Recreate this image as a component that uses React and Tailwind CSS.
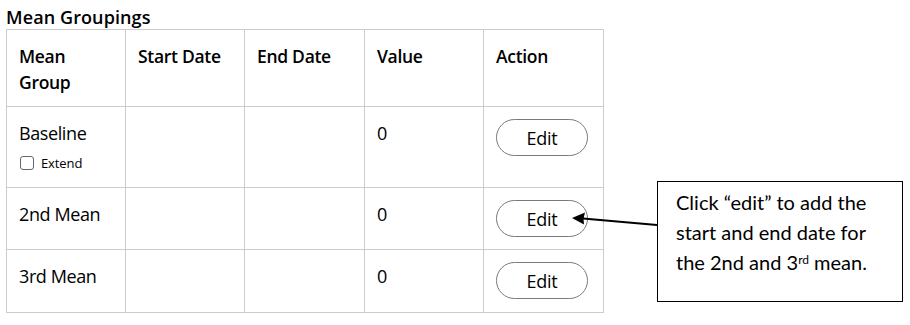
import React from "react";

const rows = [
  { name: "Baseline", extend: true, h: "h-[81px]" },
  { name: "2nd Mean", extend: false, h: "h-[62px]" },
  { name: "3rd Mean", extend: false, h: "h-[63px]" },
];

export default function App() {
  return (
    <div className="relative w-[910px] h-[325px] bg-white flex text-black" style={{ fontFamily: '"Open Sans", "Noto Sans", sans-serif' }}>
      <div className="pl-[6px] pt-[6px] flex flex-col">
        <div className="text-[18px] leading-[23px] font-semibold tracking-[0.1px]">Mean Groupings</div>
        <table className="table-fixed border-collapse w-[598px]">
          <colgroup>
            <col className="w-[119px]" />
            <col className="w-[119px]" />
            <col className="w-[120px]" />
            <col className="w-[119px]" />
            <col className="w-[120px]" />
          </colgroup>
          <thead>
            <tr className="h-[77px]">
              {["Mean Group", "Start Date", "End Date", "Value", "Action"].map((t) => (
                <th key={t} className="border border-[#cccccc] align-top text-left font-semibold text-[17.5px] leading-[26px] pl-[12px] pr-[12px] pt-[13px] tracking-[-0.3px]">
                  {t}
                </th>
              ))}
            </tr>
          </thead>
          <tbody>
            {rows.map((r) => (
              <tr key={r.name} className={r.h}>
                <td className="border border-[#cccccc] align-top pl-[12px] pt-[14px] text-[18px] leading-[24px] tracking-[-0.4px]">
                  <div>{r.name}</div>
                  {r.extend && (
                    <div className="flex items-center gap-[7px] mt-[10px] pl-[1px]">
                      <span className="w-[14px] h-[14px] border border-[#666] rounded-[3px] bg-white" />
                      <span className="text-[13px] leading-[16px] tracking-[-0.1px]">Extend</span>
                    </div>
                  )}
                </td>
                <td className="border border-[#cccccc]" />
                <td className="border border-[#cccccc]" />
                <td className="border border-[#cccccc] align-top pl-[12px] pt-[14px] text-[18px] leading-[24px]">0</td>
                <td className="border border-[#cccccc] align-top pl-[12px] pt-[12px]">
                  <button className="w-[92px] h-[37px] rounded-full border border-[#7a7a7a] bg-white text-[18px] leading-[24px] tracking-[-0.3px] flex items-center justify-center">
                    Edit
                  </button>
                </td>
              </tr>
            ))}
          </tbody>
        </table>
      </div>
      <div
        className="ml-[53px] mt-[181px] w-[246px] h-[121px] border border-black pl-[18px] pt-[5px] text-[20px] leading-[30px]"
        style={{ fontFamily: 'Lato, "Liberation Sans", sans-serif' }}
      >
        <div>Click “edit” to add the</div>
        <div>start and end date for</div>
        <div>
          the 2nd and 3<sup className="text-[12px]">rd</sup> mean.
        </div>
      </div>
      <svg className="absolute left-0 top-0 pointer-events-none" width="910" height="325">
        <line x1="657" y1="225" x2="583" y2="218.6" stroke="black" strokeWidth="2" />
        <polygon points="572,218 585,212.5 583.5,218.7 584,224.5" fill="black" />
      </svg>
    </div>
  );
}
